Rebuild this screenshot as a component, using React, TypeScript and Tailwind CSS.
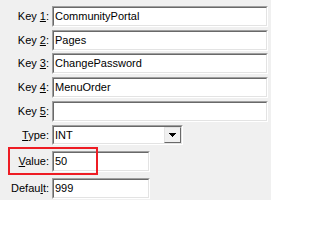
import React from "react";

type Row = { pre: string; key: string; post: string; value: string; wide: boolean; top: string };

const rows: Row[] = [
  { pre: "Key ", key: "1", post: ":", value: "CommunityPortal", wide: true, top: "mt-[6px]" },
  { pre: "Key ", key: "2", post: ":", value: "Pages", wide: true, top: "mt-[3px]" },
  { pre: "Key ", key: "3", post: ":", value: "ChangePassword", wide: true, top: "mt-[2px]" },
  { pre: "Key ", key: "4", post: ":", value: "MenuOrder", wide: true, top: "mt-[3px]" },
  { pre: "Key ", key: "5", post: ":", value: "", wide: true, top: "mt-[3px]" },
];

function Sunken({ width, children }: { width: string; children?: React.ReactNode }) {
  return (
    <div className={`${width} h-[21px] border border-t-[#a0a0a0] border-l-[#a0a0a0] border-b-white border-r-white`}>
      <div className="h-full border border-t-[#696969] border-l-[#696969] border-b-[#e3e3e3] border-r-[#e3e3e3] bg-white flex items-center pl-[1px] overflow-hidden whitespace-nowrap">
        {children}
      </div>
    </div>
  );
}

function Label({ pre, k, post }: { pre: string; k: string; post: string }) {
  return (
    <div className="w-[52px] pr-[3px] text-right whitespace-nowrap">
      {pre}
      <span className="underline underline-offset-[1px]">{k}</span>
      {post}
    </div>
  );
}

export default function App() {
  return (
    <div
      className="relative w-[271px] h-[200px] bg-[#f0f0f0] text-[11px] text-black overflow-hidden"
      style={{ fontFamily: '"Liberation Sans", Arial, sans-serif' }}
    >
      <div className="flex flex-col">
        {rows.map((r) => (
          <div key={r.key} className={`flex items-center ${r.top}`}>
            <Label pre={r.pre} k={r.key} post={r.post} />
            <Sunken width="w-[216px]">{r.value}</Sunken>
          </div>
        ))}

        <div className="flex items-center mt-[3px]">
          <Label pre="" k="T" post="ype:" />
          <div className="w-[131px] h-[20px] border border-t-[#a0a0a0] border-l-[#a0a0a0] border-b-white border-r-white">
            <div className="h-full border border-t-[#696969] border-l-[#696969] border-b-[#e3e3e3] border-r-[#e3e3e3] bg-white flex items-center">
              <span className="flex-1 pl-[1px]">INT</span>
              <div className="w-[17px] h-full border border-t-[#e3e3e3] border-l-[#e3e3e3] border-b-[#696969] border-r-[#696969] bg-[#f0f0f0] flex items-center justify-center">
                <svg width="7" height="4" viewBox="0 0 7 4">
                  <path d="M0 0h7v1h-1v1h-1v1h-1v1h-1v-1h-1v-1h-1v-1h-1z" fill="#000" />
                </svg>
              </div>
            </div>
          </div>
        </div>

        <div className="flex items-center mt-[6px]">
          <Label pre="" k="V" post="alue:" />
          <Sunken width="w-[98px]">50</Sunken>
        </div>

        <div className="flex items-center mt-[6px]">
          <Label pre="Defau" k="l" post="t:" />
          <Sunken width="w-[98px]">999</Sunken>
        </div>
      </div>

      <div className="absolute left-[8px] top-[147px] w-[90px] h-[28px] border-2 border-[#ee1c24] pointer-events-none" />
    </div>
  );
}
